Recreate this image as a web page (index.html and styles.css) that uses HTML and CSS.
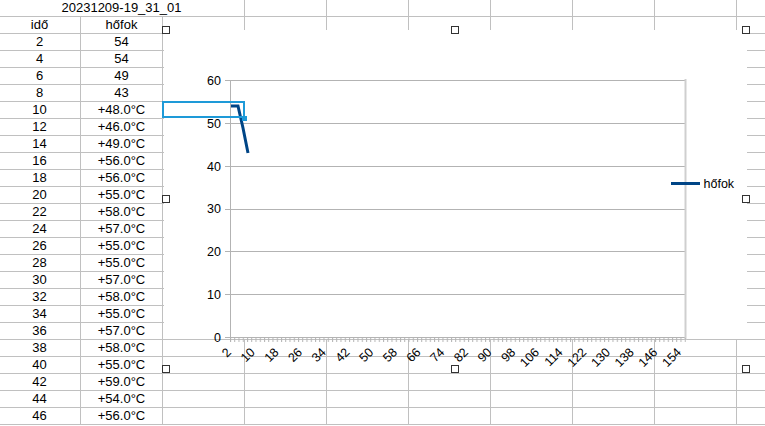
FILE: index.html
```html
<!DOCTYPE html>
<html lang="hu">
<head>
    <meta charset="UTF-8">
    <title>hőfok napló</title>
    <link rel="stylesheet" href="styles.css">
</head>
<body>
    <div class="sheet">
        <div class="row"><div class="cell title">20231209-19_31_01</div><div class="cell"></div><div class="cell"></div><div class="cell"></div><div class="cell"></div><div class="cell"></div><div class="cell"></div><div class="cell"></div></div>
        <div class="row"><div class="cell">idő</div><div class="cell">hőfok</div><div class="cell"></div><div class="cell"></div><div class="cell"></div><div class="cell"></div><div class="cell"></div><div class="cell"></div><div class="cell"></div><div class="cell"></div></div>
        <div class="row"><div class="cell">2</div><div class="cell">54</div><div class="cell"></div><div class="cell"></div><div class="cell"></div><div class="cell"></div><div class="cell"></div><div class="cell"></div><div class="cell"></div><div class="cell"></div></div>
        <div class="row"><div class="cell">4</div><div class="cell">54</div><div class="cell"></div><div class="cell"></div><div class="cell"></div><div class="cell"></div><div class="cell"></div><div class="cell"></div><div class="cell"></div><div class="cell"></div></div>
        <div class="row"><div class="cell">6</div><div class="cell">49</div><div class="cell"></div><div class="cell"></div><div class="cell"></div><div class="cell"></div><div class="cell"></div><div class="cell"></div><div class="cell"></div><div class="cell"></div></div>
        <div class="row"><div class="cell">8</div><div class="cell">43</div><div class="cell"></div><div class="cell"></div><div class="cell"></div><div class="cell"></div><div class="cell"></div><div class="cell"></div><div class="cell"></div><div class="cell"></div></div>
        <div class="row"><div class="cell">10</div><div class="cell">+48.0°C</div><div class="cell"></div><div class="cell"></div><div class="cell"></div><div class="cell"></div><div class="cell"></div><div class="cell"></div><div class="cell"></div><div class="cell"></div></div>
        <div class="row"><div class="cell">12</div><div class="cell">+46.0°C</div><div class="cell"></div><div class="cell"></div><div class="cell"></div><div class="cell"></div><div class="cell"></div><div class="cell"></div><div class="cell"></div><div class="cell"></div></div>
        <div class="row"><div class="cell">14</div><div class="cell">+49.0°C</div><div class="cell"></div><div class="cell"></div><div class="cell"></div><div class="cell"></div><div class="cell"></div><div class="cell"></div><div class="cell"></div><div class="cell"></div></div>
        <div class="row"><div class="cell">16</div><div class="cell">+56.0°C</div><div class="cell"></div><div class="cell"></div><div class="cell"></div><div class="cell"></div><div class="cell"></div><div class="cell"></div><div class="cell"></div><div class="cell"></div></div>
        <div class="row"><div class="cell">18</div><div class="cell">+56.0°C</div><div class="cell"></div><div class="cell"></div><div class="cell"></div><div class="cell"></div><div class="cell"></div><div class="cell"></div><div class="cell"></div><div class="cell"></div></div>
        <div class="row"><div class="cell">20</div><div class="cell">+55.0°C</div><div class="cell"></div><div class="cell"></div><div class="cell"></div><div class="cell"></div><div class="cell"></div><div class="cell"></div><div class="cell"></div><div class="cell"></div></div>
        <div class="row"><div class="cell">22</div><div class="cell">+58.0°C</div><div class="cell"></div><div class="cell"></div><div class="cell"></div><div class="cell"></div><div class="cell"></div><div class="cell"></div><div class="cell"></div><div class="cell"></div></div>
        <div class="row"><div class="cell">24</div><div class="cell">+57.0°C</div><div class="cell"></div><div class="cell"></div><div class="cell"></div><div class="cell"></div><div class="cell"></div><div class="cell"></div><div class="cell"></div><div class="cell"></div></div>
        <div class="row"><div class="cell">26</div><div class="cell">+55.0°C</div><div class="cell"></div><div class="cell"></div><div class="cell"></div><div class="cell"></div><div class="cell"></div><div class="cell"></div><div class="cell"></div><div class="cell"></div></div>
        <div class="row"><div class="cell">28</div><div class="cell">+55.0°C</div><div class="cell"></div><div class="cell"></div><div class="cell"></div><div class="cell"></div><div class="cell"></div><div class="cell"></div><div class="cell"></div><div class="cell"></div></div>
        <div class="row"><div class="cell">30</div><div class="cell">+57.0°C</div><div class="cell"></div><div class="cell"></div><div class="cell"></div><div class="cell"></div><div class="cell"></div><div class="cell"></div><div class="cell"></div><div class="cell"></div></div>
        <div class="row"><div class="cell">32</div><div class="cell">+58.0°C</div><div class="cell"></div><div class="cell"></div><div class="cell"></div><div class="cell"></div><div class="cell"></div><div class="cell"></div><div class="cell"></div><div class="cell"></div></div>
        <div class="row"><div class="cell">34</div><div class="cell">+55.0°C</div><div class="cell"></div><div class="cell"></div><div class="cell"></div><div class="cell"></div><div class="cell"></div><div class="cell"></div><div class="cell"></div><div class="cell"></div></div>
        <div class="row"><div class="cell">36</div><div class="cell">+57.0°C</div><div class="cell"></div><div class="cell"></div><div class="cell"></div><div class="cell"></div><div class="cell"></div><div class="cell"></div><div class="cell"></div><div class="cell"></div></div>
        <div class="row"><div class="cell">38</div><div class="cell">+58.0°C</div><div class="cell"></div><div class="cell"></div><div class="cell"></div><div class="cell"></div><div class="cell"></div><div class="cell"></div><div class="cell"></div><div class="cell"></div></div>
        <div class="row"><div class="cell">40</div><div class="cell">+55.0°C</div><div class="cell"></div><div class="cell"></div><div class="cell"></div><div class="cell"></div><div class="cell"></div><div class="cell"></div><div class="cell"></div><div class="cell"></div></div>
        <div class="row"><div class="cell">42</div><div class="cell">+59.0°C</div><div class="cell"></div><div class="cell"></div><div class="cell"></div><div class="cell"></div><div class="cell"></div><div class="cell"></div><div class="cell"></div><div class="cell"></div></div>
        <div class="row"><div class="cell">44</div><div class="cell">+54.0°C</div><div class="cell"></div><div class="cell"></div><div class="cell"></div><div class="cell"></div><div class="cell"></div><div class="cell"></div><div class="cell"></div><div class="cell"></div></div>
        <div class="row"><div class="cell">46</div><div class="cell">+56.0°C</div><div class="cell"></div><div class="cell"></div><div class="cell"></div><div class="cell"></div><div class="cell"></div><div class="cell"></div><div class="cell"></div><div class="cell"></div></div>
    </div>

    <!-- chart object, floating over the cells -->
    <svg class="chart" width="765" height="426" viewBox="0 0 765 426">
        <defs>
            <pattern id="ticks" x="230" y="337" width="4.25" height="5" patternUnits="userSpaceOnUse">
                <rect width="1" height="5" fill="#b3b3b3"/>
            </pattern>
        </defs>
        <rect class="chart-bg" x="164" y="30" width="583" height="309"/>

        <!-- gridlines -->
        <g class="grid">
            <line x1="230" y1="80.5" x2="685" y2="80.5"/>
            <line x1="225" y1="123.5" x2="685" y2="123.5"/>
            <line x1="225" y1="166.5" x2="685" y2="166.5"/>
            <line x1="225" y1="209.5" x2="685" y2="209.5"/>
            <line x1="225" y1="251.5" x2="685" y2="251.5"/>
            <line x1="225" y1="294.5" x2="685" y2="294.5"/>
            <line x1="225" y1="337.5" x2="685" y2="337.5"/>
            <line x1="225" y1="80.5" x2="230" y2="80.5"/>
            <line x1="230.5" y1="80" x2="230.5" y2="342"/>
        </g>
        <line class="wall-edge" x1="685.5" y1="79" x2="685.5" y2="340"/>
        <rect x="230" y="338" width="456" height="4" fill="url(#ticks)"/>

        <!-- value axis -->
        <g class="label" text-anchor="end">
            <text x="221" y="84.5">60</text>
            <text x="221" y="127.5">50</text>
            <text x="221" y="170.5">40</text>
            <text x="221" y="213">30</text>
            <text x="221" y="255.5">20</text>
            <text x="221" y="298.5">10</text>
            <text x="221" y="341.5">0</text>
        </g>

        <!-- category axis, every 4th label -->
        <g class="label" text-anchor="end">
            <text transform="translate(232 353) rotate(-45)">2</text>
            <text transform="translate(255.7 353) rotate(-45)">10</text>
            <text transform="translate(279.4 353) rotate(-45)">18</text>
            <text transform="translate(303 353) rotate(-45)">26</text>
            <text transform="translate(326.7 353) rotate(-45)">34</text>
            <text transform="translate(350.4 353) rotate(-45)">42</text>
            <text transform="translate(374.1 353) rotate(-45)">50</text>
            <text transform="translate(397.8 353) rotate(-45)">58</text>
            <text transform="translate(421.4 353) rotate(-45)">66</text>
            <text transform="translate(445.1 353) rotate(-45)">74</text>
            <text transform="translate(468.8 353) rotate(-45)">82</text>
            <text transform="translate(492.5 353) rotate(-45)">90</text>
            <text transform="translate(516.2 353) rotate(-45)">98</text>
            <text transform="translate(539.8 353) rotate(-45)">106</text>
            <text transform="translate(563.5 353) rotate(-45)">114</text>
            <text transform="translate(587.2 353) rotate(-45)">122</text>
            <text transform="translate(610.9 353) rotate(-45)">130</text>
            <text transform="translate(634.6 353) rotate(-45)">138</text>
            <text transform="translate(658.2 353) rotate(-45)">146</text>
            <text transform="translate(682 353) rotate(-45)">154</text>
        </g>

        <!-- series -->
        <polyline class="series" points="231,106 238,106 243,128 248,153"/>

        <!-- legend -->
        <line class="series" x1="671" y1="183.5" x2="700" y2="183.5"/>
        <text class="label" x="703.5" y="187.5">hőfok</text>

        <!-- cell cursor on C10 -->
        <rect class="cursor" x="163" y="102" width="81" height="15"/>
        <rect class="cursor-dot" x="242" y="116" width="5" height="5"/>

        <!-- selection handles -->
        <g class="handle">
            <rect x="162.5" y="26.5" width="7" height="7"/>
            <rect x="451.5" y="26.5" width="7" height="7"/>
            <rect x="742.5" y="26.5" width="7" height="7"/>
            <rect x="162.5" y="195.5" width="7" height="7"/>
            <rect x="742.5" y="195.5" width="7" height="7"/>
            <rect x="162.5" y="365.5" width="7" height="7"/>
            <rect x="451.5" y="365.5" width="7" height="7"/>
            <rect x="742.5" y="365.5" width="7" height="7"/>
        </g>
    </svg>
</body>
</html>
```

FILE: styles.css
```css
body {
    margin: 0;
    width: 765px;
    height: 426px;
    overflow: hidden;
    position: relative;
    background: #fff;
    font-family: 'Liberation Sans', Arial, sans-serif;
    font-size: 13px;
    color: #000;
}

/* the sheet keeps going to the right, only the visible part is kept */
.sheet {
    width: 766px;
    margin-left: -1px;
    overflow: hidden;
}

.row {
    display: flex;
}

.cell {
    flex: none;
    width: 81px;
    height: 16px;
    line-height: 16px;
    border-right: 1px solid #c0c0c0;
    border-bottom: 1px solid #c0c0c0;
    text-align: center;
    white-space: nowrap;
}

/* title text overflows over A..C, so the inner lines are hidden */
.cell.title {
    width: 245px;
}

.chart {
    position: absolute;
    top: 0;
    left: 0;
}

.chart-bg { fill: #fff; }

.grid line {
    stroke: #b3b3b3;
    stroke-width: 1;
}

.wall-edge {
    stroke: #cfcfcf;
    stroke-width: 2;
}

.label {
    font-family: 'Liberation Sans', Arial, sans-serif;
    font-size: 12.5px;
    fill: #000;
}

.series {
    fill: none;
    stroke: #004586;
    stroke-width: 3;
}

.cursor {
    fill: none;
    stroke: #1e9ad8;
    stroke-width: 2;
}

.cursor-dot { fill: #1e9ad8; }

.handle rect {
    fill: #fff;
    stroke: #333;
    stroke-width: 1;
}
```
